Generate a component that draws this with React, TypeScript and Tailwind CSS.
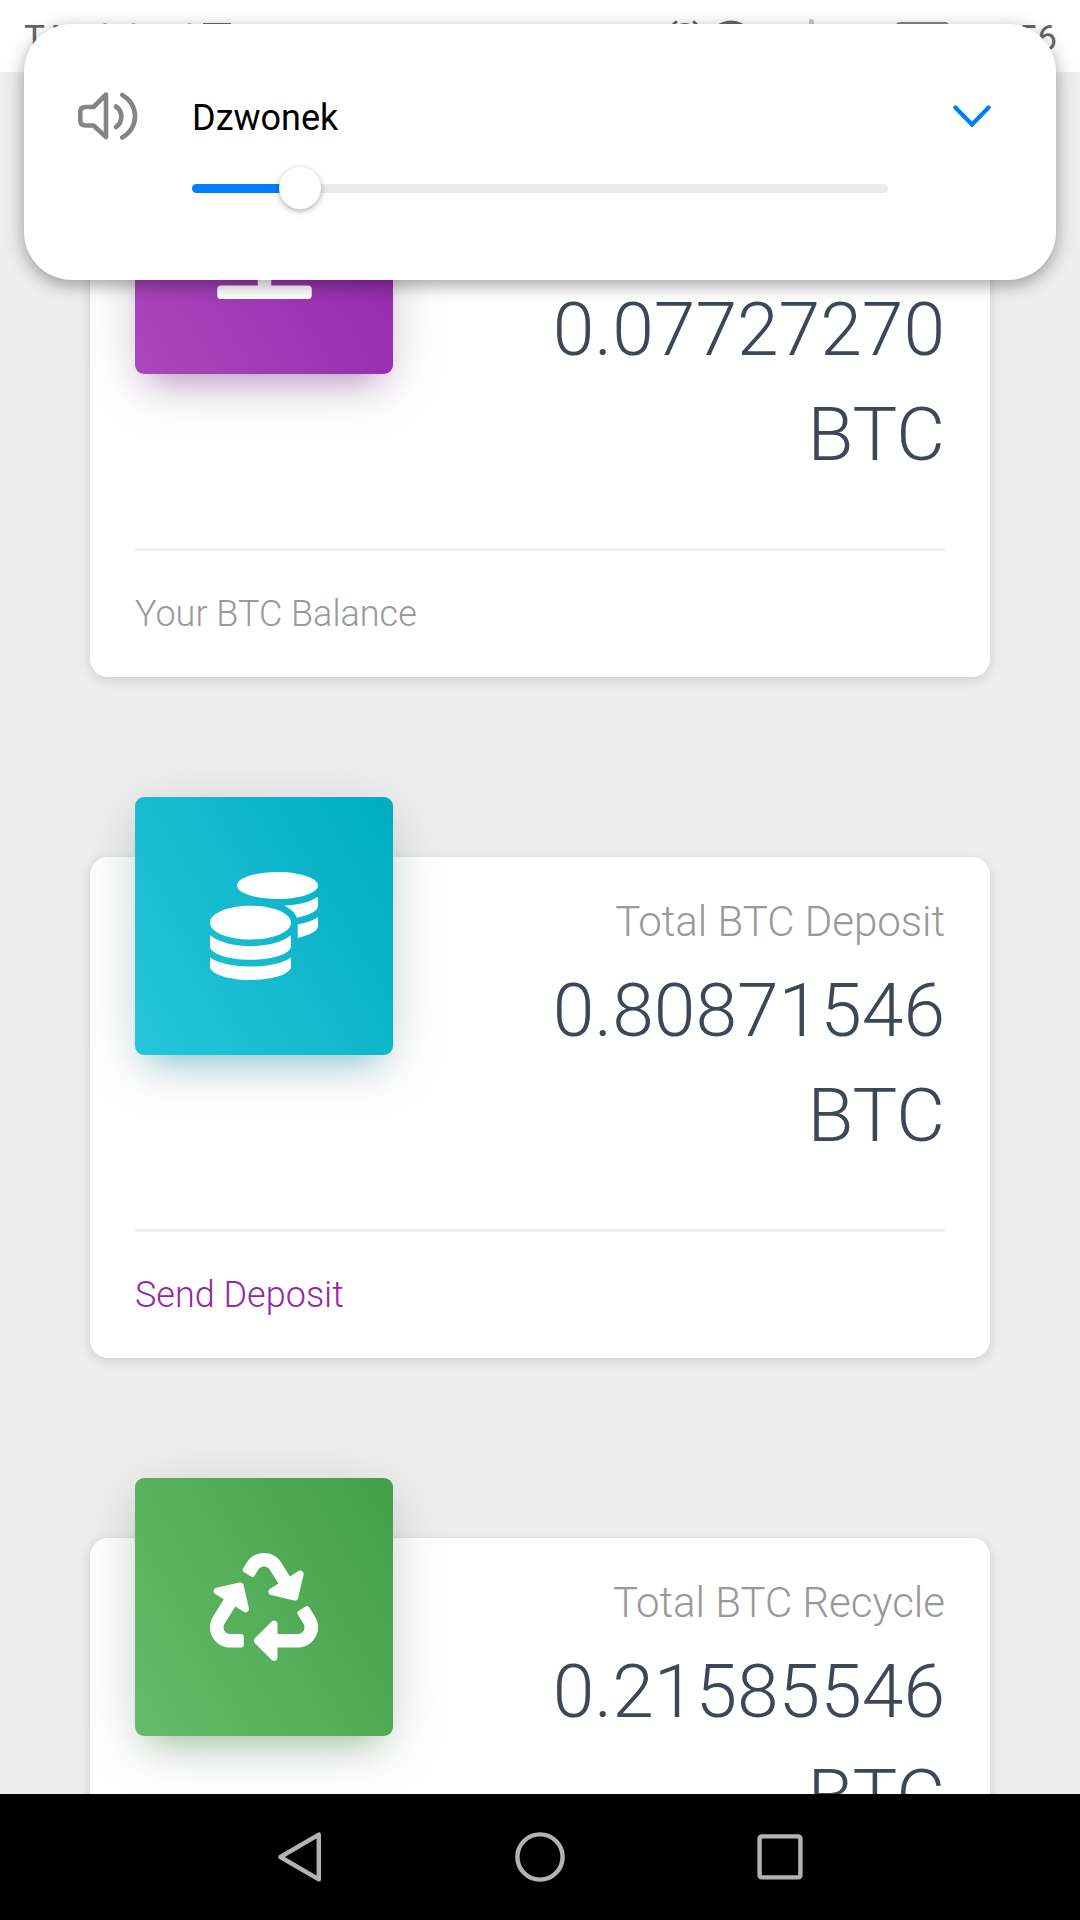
import { useState } from "react";
import type { ReactNode } from "react";
import { FaBalanceScale, FaCoins, FaRecycle } from "react-icons/fa";

type Stat = {
  id: string;
  label: string;
  value: string;
  footer?: string;
  isLink?: boolean;
  tile: string;
  icon: ReactNode;
};

const stats: Stat[] = [
  {
    id: "balance",
    label: "BTC Balance",
    value: "0.07727270",
    footer: "Your BTC Balance",
    tile: "bg-[linear-gradient(60deg,#ab47bc,#8e24aa)] shadow-[0_12px_60px_rgba(0,0,0,0.14),0_21px_30px_-15px_rgba(156,39,176,0.4)]",
    icon: <FaBalanceScale className="h-[108px] w-[135px]" />,
  },
  {
    id: "deposit",
    label: "Total BTC Deposit",
    value: "0.80871546",
    footer: "Send Deposit",
    isLink: true,
    tile: "bg-[linear-gradient(60deg,#26c6da,#00acc1)] shadow-[0_12px_60px_rgba(0,0,0,0.14),0_21px_30px_-15px_rgba(0,188,212,0.4)]",
    icon: <FaCoins className="size-[108px]" />,
  },
  {
    id: "recycle",
    label: "Total BTC Recycle",
    value: "0.21585546",
    tile: "bg-[linear-gradient(60deg,#66bb6a,#43a047)] shadow-[0_12px_60px_rgba(0,0,0,0.14),0_21px_30px_-15px_rgba(76,175,80,0.4)]",
    icon: <FaRecycle className="size-[108px]" />,
  },
];

function StatusBar() {
  return (
    <header className="flex h-[72px] shrink-0 justify-between bg-white pl-6 pr-[23px] pt-4 text-[35px] leading-[41px] text-[#666]">
      <div className="flex">
        <span className="mt-0.5">T-Mobile.pl</span>
        <svg className="ml-[9px] mt-[7px] h-7 w-7" viewBox="0 0 28 28" fill="none" stroke="currentColor" strokeWidth="1.4">
          <path d="M0.5 0.8H27.5V26H0.5Z" />
        </svg>
      </div>
      <div className="flex">
        {/* alarm */}
        <svg className="mt-[3px] h-8 w-8" viewBox="0 0 32 32" fill="none" stroke="currentColor" strokeWidth="3" strokeLinecap="round">
          <path d="M2.5 7.5 7 3M29.5 7.5 25 3" />
          <circle cx="16" cy="17" r="11.5" />
        </svg>
        <svg className="ml-[10px] mt-1 h-10 w-10" viewBox="0 0 40 40" fill="none" stroke="currentColor" strokeWidth="4">
          <path d="M1 11Q20 -6 39 11" />
        </svg>
        {/* empty signal bar */}
        <div className="ml-[58px] mt-[3px] h-7 w-[5px] rounded-full bg-[#ccc]" />
        <div className="ml-[82px] mt-1.5 h-7 w-[53px] rounded border-2 border-[#888]" />
        <span className="ml-[69px] mt-0.5">56</span>
      </div>
    </header>
  );
}

function StatCard({ stat }: { stat: Stat }) {
  return (
    <section className="h-[501px] shrink-0 rounded-[18px] bg-white px-[45px] shadow-[0_3px_12px_rgba(0,0,0,0.14)]">
      <div className="flex h-[372px] justify-between">
        <div className={`-mt-[60px] flex size-[258px] items-center justify-center rounded-[9px] text-white ${stat.tile}`}>{stat.icon}</div>
        <div className="pt-7 text-right font-light">
          <p className="text-[42px] leading-[73px] text-[#999]">{stat.label}</p>
          <h3 className="text-[75px] leading-[105px] text-[#3c4858]">
            {stat.value}
            <br />
            BTC
          </h3>
        </div>
      </div>
      <div className="border-t-3 border-[#eee] pt-9 text-4xl leading-[54px] font-light">
        {stat.isLink ? <a className="text-[#9129a5]">{stat.footer}</a> : <span className="text-[#999]">{stat.footer}</span>}
      </div>
    </section>
  );
}

function VolumePanel() {
  const [volume] = useState(15.5);

  return (
    <div className="absolute left-6 top-6 flex h-64 w-[1032px] rounded-[48px] bg-white pl-[52px] pt-[66px] shadow-[0_5px_18px_rgba(0,0,0,0.36)]">
      <svg className="-mt-px h-[52px] w-16 shrink-0" viewBox="0 0 64 52" fill="none" stroke="#858585" strokeWidth="4.6" strokeLinecap="round" strokeLinejoin="round">
        <path d="M30 5.5 17.5 18H9.5Q4.3 18 4.3 23V31.5Q4.3 36.5 9.5 36.5H17.5L30 48Z" />
        <path d="M40 17.5A12.5 12.5 0 0 1 40 38" />
        <path d="M46.2 6A24 24 0 0 1 46.2 48.5" />
      </svg>
      <div className="ml-[52px] w-[696px]">
        <div className="pt-px text-4xl leading-[54px] text-black">Dzwonek</div>
        <div className="relative mt-[39px] h-[9px] rounded-full bg-[#ebebeb]">
          <div className="h-full rounded-full bg-[#007dff]" style={{ width: `${volume}%` }} />
          <div
            className="absolute -top-[17px] -ml-[21px] size-[42px] rounded-full bg-white shadow-[0_2px_6px_rgba(0,0,0,0.32)]"
            style={{ left: `${volume}%` }}
          />
        </div>
      </div>
      <svg className="ml-[63px] mt-3.5 h-7 w-[42px]" viewBox="0 0 42 28" fill="none" stroke="#007dff" strokeWidth="4.2" strokeLinecap="round">
        <path d="M4.4 3.5 21 20.5 37.6 3.5" />
      </svg>
    </div>
  );
}

function NavBar() {
  return (
    <nav className="flex h-[126px] shrink-0 items-center justify-center gap-[188px] bg-black">
      <svg className="size-[52px]" viewBox="0 0 52 52" fill="none" stroke="#b3b3b3" strokeWidth="4.4" strokeLinejoin="round">
        <path d="M44.8 3.6V48.4L6.4 26Z" />
      </svg>
      <svg className="size-[52px]" viewBox="0 0 52 52" fill="none" stroke="#b3b3b3" strokeWidth="4.4">
        <circle cx="26" cy="26" r="22.6" />
      </svg>
      <svg className="size-[52px]" viewBox="0 0 52 52" fill="none" stroke="#b3b3b3" strokeWidth="4.4">
        <rect x="5.6" y="5.4" width="40.8" height="41" rx="2" />
      </svg>
    </nav>
  );
}

export default function App() {
  return (
    <div className="relative flex h-[1920px] w-[1080px] flex-col overflow-hidden bg-[#eee] font-['Roboto',sans-serif]">
      <StatusBar />
      <main className="flex min-h-0 flex-1 flex-col gap-[180px] overflow-hidden px-[90px] pt-[104px]">
        {stats.map((stat) => (
          <StatCard key={stat.id} stat={stat} />
        ))}
      </main>
      <NavBar />
      <VolumePanel />
    </div>
  );
}
